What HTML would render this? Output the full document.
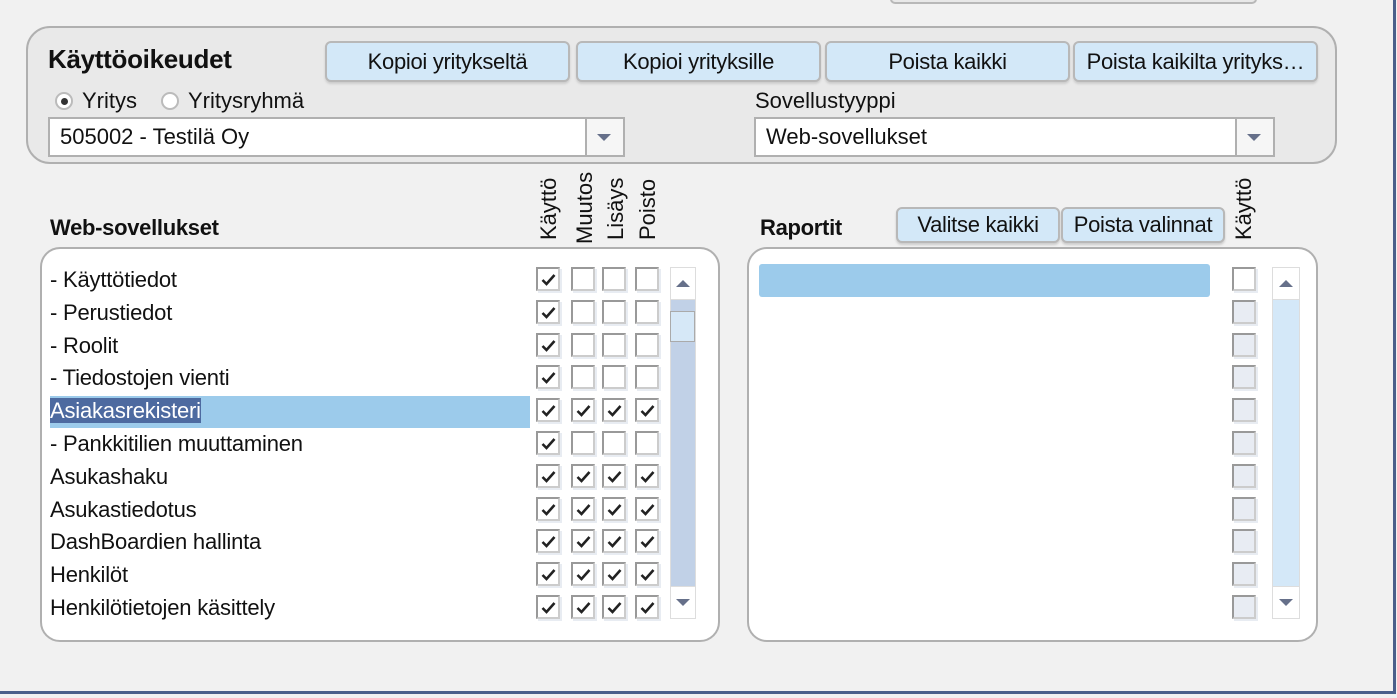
<!DOCTYPE html>
<html><head><meta charset="utf-8"><style>
*{box-sizing:border-box;margin:0;padding:0}
body{width:1397px;height:698px;background:#f1f1f1;font-family:"Liberation Sans",Arial,sans-serif;color:#111;position:relative;overflow:hidden}
.a{position:absolute}
.btn{position:absolute;height:41px;background:#d3e8f8;border:2px solid #b8b8b8;border-radius:6px;font-size:22px;text-align:center;line-height:37px;box-shadow:0 2px 2px #ccc;white-space:nowrap;overflow:hidden;letter-spacing:-0.3px}
.panel{position:absolute;background:#fff;border:2px solid #b0b0b0;border-radius:20px}
.row{position:absolute;left:50px;font-size:22px;height:32px;line-height:32px;letter-spacing:-0.2px}
.cb{position:absolute;width:24px;height:24px;background:#fff;border:2px solid #999;border-right-color:#ccc;border-bottom-color:#ccc;box-shadow:2px 2px 0 #e8ecf2}
.cb.g{background:#e8ecf3}
.cb svg{position:absolute;left:3px;top:4px}
.vt{position:absolute;font-size:22px;transform:rotate(-90deg);transform-origin:left top;white-space:nowrap}
.sel{position:absolute;background:#fff;border:2px solid #b0b0b0;height:40px;font-size:22px;line-height:36px;padding-left:10px}
.dd{position:absolute;right:0;top:0;width:38px;height:36px;border-left:2px solid #b0b0b0;background:#f6f6f6}
.tri{width:0;height:0;border-left:7px solid transparent;border-right:7px solid transparent;position:absolute}
</style></head><body>
<div class="a" style="left:890px;top:-6px;width:367px;height:10px;border:2px solid #b8b8b8;border-radius:6px;background:#e8e8e8"></div>
<div class="a" style="left:1393px;top:0;width:3px;height:694px;background:#4a5f8a"></div>
<div class="a" style="left:0;top:691px;width:1396px;height:3px;background:#4a5f8a"></div>

<div class="a" style="left:26px;top:26px;width:1311px;height:138px;border:2px solid #b0b0b0;border-radius:24px;background:#e9e9e9"></div>
<div class="a" style="left:48px;top:44px;font-size:26px;font-weight:bold;letter-spacing:-0.3px">Käyttöoikeudet</div>
<div class="btn" style="left:325px;top:41px;width:245px">Kopioi yritykseltä</div>
<div class="btn" style="left:576px;top:41px;width:245px">Kopioi yrityksille</div>
<div class="btn" style="left:825px;top:41px;width:245px">Poista kaikki</div>
<div class="btn" style="left:1073px;top:41px;width:245px">Poista kaikilta yrityks…</div>
<div class="a" style="left:55px;top:92px;width:18px;height:18px;border-radius:50%;border:2px solid #bbb;background:#fff"><div class="a" style="left:4px;top:4px;width:7px;height:7px;border-radius:50%;background:#333"></div></div>
<div class="a" style="left:82px;top:88px;font-size:22px">Yritys</div>
<div class="a" style="left:161px;top:92px;width:18px;height:18px;border-radius:50%;border:2px solid #bbb;background:#fff"></div>
<div class="a" style="left:188px;top:88px;font-size:22px">Yritysryhmä</div>
<div class="a" style="left:755px;top:88px;font-size:22px">Sovellustyyppi</div>
<div class="sel" style="left:48px;top:117px;width:577px">505002 - Testilä Oy<div class="dd"><div class="tri" style="left:10px;top:15px;border-top:7px solid #66708a"></div></div></div>
<div class="sel" style="left:754px;top:117px;width:521px">Web-sovellukset<div class="dd"><div class="tri" style="left:10px;top:15px;border-top:7px solid #66708a"></div></div></div>

<div class="a" style="left:50px;top:215px;font-size:22px;font-weight:bold;letter-spacing:-0.3px">Web-sovellukset</div>
<div class="vt" style="left:536px;top:240px">Käyttö</div>
<div class="vt" style="left:572px;top:244px">Muutos</div>
<div class="vt" style="left:603px;top:240px">Lisäys</div>
<div class="vt" style="left:635px;top:240px">Poisto</div>
<div class="a" style="left:760px;top:215px;font-size:22px;font-weight:bold;letter-spacing:-0.3px">Raportit</div>
<div class="btn" style="left:896px;top:207px;width:164px;height:36px;line-height:32px">Valitse kaikki</div>
<div class="btn" style="left:1061px;top:207px;width:164px;height:36px;line-height:32px">Poista valinnat</div>
<div class="vt" style="left:1231px;top:240px">Käyttö</div>

<div class="panel" style="left:40px;top:247px;width:680px;height:395px"></div>
<div class="panel" style="left:747px;top:247px;width:571px;height:395px"></div>
<div class="a" style="left:50px;top:396px;width:480px;height:32px;background:#9ccbeb"></div>

<div class="a" style="left:670px;top:267px;width:26px;height:352px;background:#c1d1e7;border:1px solid #ddd"></div>
<div class="a" style="left:670px;top:267px;width:26px;height:33px;background:#fff;border:1px solid #ddd"><div class="tri" style="left:5px;top:12px;border-bottom:7px solid #66708a"></div></div>
<div class="a" style="left:670px;top:311px;width:25px;height:31px;background:#d6e8f7;border:1px solid #aaa"></div>
<div class="a" style="left:670px;top:586px;width:26px;height:33px;background:#fff;border:1px solid #ddd"><div class="tri" style="left:5px;top:12px;border-top:7px solid #66708a"></div></div>

<div class="a" style="left:759px;top:264px;width:451px;height:33px;background:#9ccbeb;border-radius:3px"></div>
<div class="a" style="left:1272px;top:267px;width:28px;height:352px;background:#d4e8f8;border:1px solid #ddd"></div>
<div class="a" style="left:1272px;top:267px;width:28px;height:33px;background:#fff;border:1px solid #ddd"><div class="tri" style="left:6px;top:12px;border-bottom:7px solid #66708a"></div></div>
<div class="a" style="left:1272px;top:586px;width:28px;height:33px;background:#fff;border:1px solid #ddd"><div class="tri" style="left:6px;top:12px;border-top:7px solid #66708a"></div></div>

<div id="rows"></div>
<script>
var names=["- Käyttötiedot","- Perustiedot","- Roolit","- Tiedostojen vienti","Asiakasrekisteri","- Pankkitilien muuttaminen","Asukashaku","Asukastiedotus","DashBoardien hallinta","Henkilöt","Henkilötietojen käsittely"];
var full=[0,0,0,0,1,0,1,1,1,1,1];
var ck='<svg width="15" height="13" viewBox="0 0 15 13"><path d="M1.5 7 L5.5 11 L13.5 2" fill="none" stroke="#222" stroke-width="2.6"/></svg>';
var h='',xs=[536,571,602,635];
for(var i=0;i<11;i++){
 var y=263+i*32.8;
 if(i==4) h+='<div class="row" style="top:'+(y+1)+'px"><span style="background:#4d6aa0;color:#fff">'+names[i]+'</span></div>';
 else h+='<div class="row" style="top:'+(y+1)+'px">'+names[i]+'</div>';
 for(var j=0;j<4;j++){
  var c=(j==0||full[i]);
  h+='<div class="cb" style="left:'+xs[j]+'px;top:'+(y+4)+'px">'+(c?ck:'')+'</div>';
 }
 h+='<div class="cb'+(i>0?' g':'')+'" style="left:1232px;top:'+(y+4)+'px"></div>';
}
document.getElementById('rows').innerHTML=h;
</script>
</body></html>
